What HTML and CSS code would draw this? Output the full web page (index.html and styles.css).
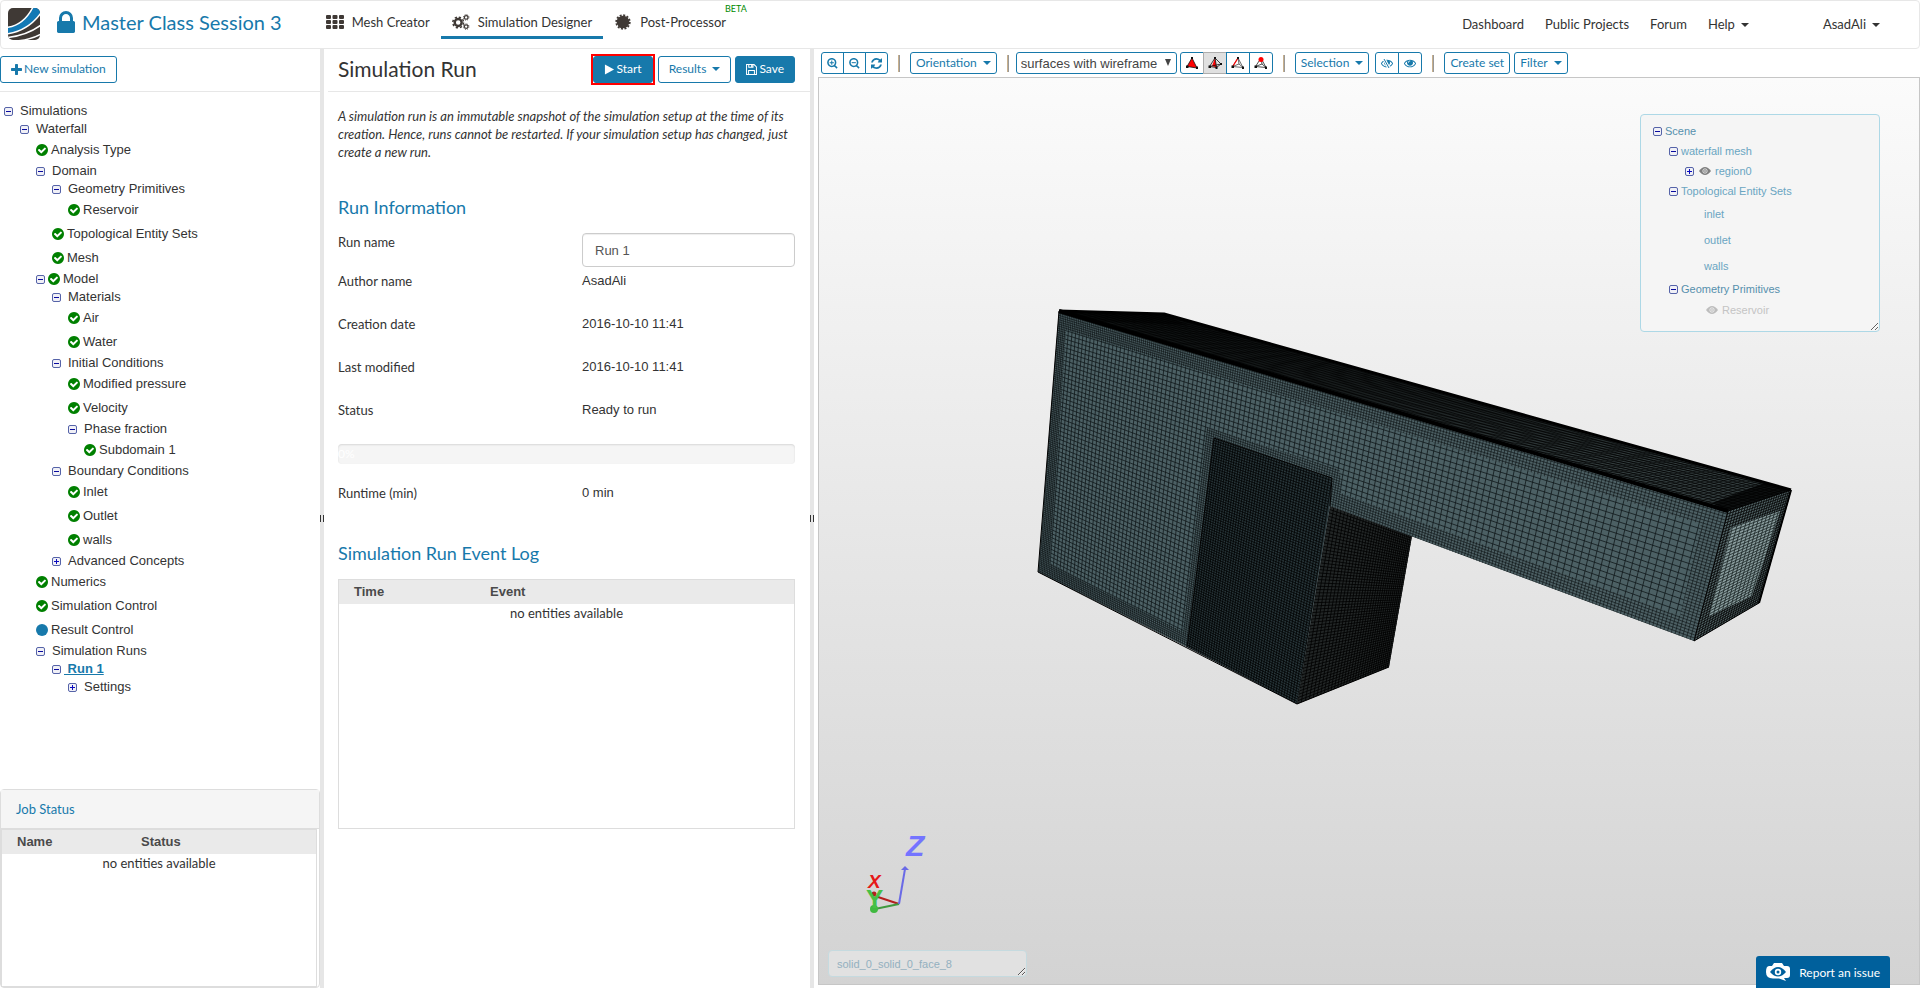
FILE: index.html
```
<!DOCTYPE html>
<html lang="en">
  <head>
    <meta charset="utf-8" />
    <meta name="viewport" content="width=device-width, initial-scale=1" />
    <title>Master Class Session 3</title>
    <link rel="stylesheet" href="styles.css">
    <script src="script.js" defer></script>
  </head>

  <body>
    <!-- Icon sprite -->
    <svg class="sprite" aria-hidden="true">
      <symbol id="lock" viewBox="320 128 1152 1408"><path d="M640 768h512v-192q0-106-75-181t-181-75-181 75-75 181v192zm832 96v576q0 40-28 68t-68 28h-960q-40 0-68-28t-28-68v-576q0-40 28-68t68-28h32v-192q0-184 132-316t316-132 316 132 132 316v192h32q40 0 68 28t28 68z"/></symbol>
      <symbol id="plus" viewBox="192 128 1408 1408"><path d="M1600 736v192q0 40-28 68t-68 28h-416v416q0 40-28 68t-68 28h-192q-40 0-68-28t-28-68v-416h-416q-40 0-68-28t-28-68v-192q0-40 28-68t68-28h416v-416q0-40 28-68t68-28h192q40 0 68 28t28 68v416h416q40 0 68 28t28 68z"/></symbol>
      <symbol id="check" viewBox="128 128 1536 1536"><path d="M1412 734q0-28-18-46l-91-90q-19-19-45-19t-45 19l-408 407-226-226q-19-19-45-19t-45 19l-91 90q-18 18-18 46 0 27 18 45l362 362q19 19 45 19 27 0 46-19l543-543q18-18 18-45zm252 162q0 209-103 385.5t-279.5 279.5-385.5 103-385.5-103-279.5-279.5-103-385.5 103-385.5 279.5-279.5 385.5-103 385.5 103 279.5 279.5 103 385.5z"/></symbol>
      <symbol id="dot" viewBox="0 0 12 12"><circle cx="6" cy="6" r="6"/></symbol>
      <symbol id="refresh" viewBox="128 128 1536 1536"><path d="M1639 1056q0 5-1 7-64 268-268 434.5t-478 166.5q-146 0-282.5-55t-243.5-157l-129 129q-19 19-45 19t-45-19-19-45v-448q0-26 19-45t45-19h448q26 0 45 19t19 45-19 45l-137 137q71 66 161 102t187 36q134 0 250-65t186-179q11-17 53-117 8-23 30-23h192q13 0 22.5 9.5t9.5 22.5zm25-800v448q0 26-19 45t-45 19h-448q-26 0-45-19t-19-45 19-45l138-138q-148-137-349-137-134 0-250 65t-186 179q-11 17-53 117-8 23-30 23h-199q-13 0-22.5-9.5t-9.5-22.5v-7q65-268 270-434.5t480-166.5q146 0 284 55.5t245 156.5l130-129q19-19 45-19t45 19 19 45z"/></symbol>
      <symbol id="zoom-in" viewBox="0 0 12 12"><path d="M9.4 5a4.2 4.2 0 1 1-8.4 0a4.2 4.2 0 0 1 8.4 0zM8.2 8.2L11 11" fill="none" stroke="currentColor" stroke-width="1.7"/><path d="M5.2 2.8v4.6M2.9 5.1h4.6" stroke="currentColor" stroke-width="1.1"/></symbol>
      <symbol id="zoom-out" viewBox="0 0 12 12"><path d="M9.4 5a4.2 4.2 0 1 1-8.4 0a4.2 4.2 0 0 1 8.4 0zM8.2 8.2L11 11" fill="none" stroke="currentColor" stroke-width="1.7"/><path d="M2.9 5.1h4.6" stroke="currentColor" stroke-width="1.1"/></symbol>
      <symbol id="eye" viewBox="0 384 1792 1152"><path d="M1664 960q-152-236-381-353 61 104 61 225 0 185-131.5 316.5t-316.5 131.5-316.5-131.5-131.5-316.5q0-121 61-225-229 117-381 353 133 205 333.5 326.5t434.5 121.5 434.5-121.5 333.5-326.5zm-720-384q0-20-14-34t-34-14q-125 0-214.5 89.5t-89.5 214.5q0 20 14 34t34 14 34-14 14-34q0-86 61-147t147-61q20 0 34-14t14-34zm848 384q0 34-20 69-140 230-376.5 368.5t-499.5 138.5-499.5-139-376.5-368q-20-35-20-69t20-69q140-229 376.5-368t499.5-139 499.5 139 376.5 368q20 35 20 69z"/></symbol>
      <symbol id="eye-full" viewBox="0 0 12 8"><path d="M0 4Q3 0 6 0t6 4q-3 4-6 4T0 4z" opacity=".75"/><circle cx="6" cy="4" r="2.2" fill="none" stroke="#f4f4f4" stroke-width=".8"/><circle cx="6" cy="4" r=".8" fill="#f4f4f4"/></symbol>
      <symbol id="grid" viewBox="0 0 18 14"><path d="M0 1q0-1 1-1h3q1 0 1 1v2q0 1-1 1H1q-1 0-1-1zM6.500 1q0-1 1-1h3q1 0 1 1v2q0 1-1 1h-3q-1 0-1-1zM13 1q0-1 1-1h3q1 0 1 1v2q0 1-1 1h-3q-1 0-1-1zM0 6q0-1 1-1h3q1 0 1 1v2q0 1-1 1H1q-1 0-1-1zM6.500 6q0-1 1-1h3q1 0 1 1v2q0 1-1 1h-3q-1 0-1-1zM13 6q0-1 1-1h3q1 0 1 1v2q0 1-1 1h-3q-1 0-1-1zM0 11q0-1 1-1h3q1 0 1 1v2q0 1-1 1H1q-1 0-1-1zM6.500 11q0-1 1-1h3q1 0 1 1v2q0 1-1 1h-3q-1 0-1-1zM13 11q0-1 1-1h3q1 0 1 1v2q0 1-1 1h-3q-1 0-1-1z"/></symbol>
      <symbol id="gears" viewBox="0 0 19 17"><g fill="none" stroke="currentColor"><circle cx="6.500" cy="9" r="3.700" stroke-width="2.600"/><circle cx="6.500" cy="9" r="5.700" stroke-width="1.600" stroke-dasharray="2.400 2.080"/><circle cx="15" cy="3.600" r="1.900" stroke-width="1.300"/><circle cx="15" cy="3.600" r="2.900" stroke-width="1" stroke-dasharray="1.200 1.080"/><circle cx="15" cy="13.400" r="1.900" stroke-width="1.300"/><circle cx="15" cy="13.400" r="2.900" stroke-width="1" stroke-dasharray="1.200 1.080"/></g></symbol>
      <symbol id="seal" viewBox="0 0 16 16"><circle cx="8" cy="8" r="6.300"/><circle cx="8" cy="8" r="6.800" fill="none" stroke="currentColor" stroke-width="1.800" stroke-dasharray="2 1.560"/></symbol>
      <symbol id="play" viewBox="0 0 10 12"><path d="M0 .6v10.800l10-5.400z"/></symbol>
      <symbol id="floppy" viewBox="0 0 12 12"><path d="M.6.6h8.200l2.600 2.600v8.200H.6zM3 .6v3h4.600v-3M2.800 11.400V7h6.400v4.400" fill="none" stroke="currentColor" stroke-width="1.100"/><path d="M5.600.6h1.600v2.600H5.600z"/></symbol>
      <symbol id="minus-box" viewBox="0 0 9 9"><rect x=".5" y=".5" width="8" height="8" rx="1.500" fill="#f0f0f6" stroke="#5563a8"/><path d="M2 4.500h5" stroke="#0a0aa0"/></symbol>
      <symbol id="plus-box" viewBox="0 0 9 9"><rect x=".5" y=".5" width="8" height="8" rx="1.500" fill="#f0f0f6" stroke="#5563a8"/><path d="M2 4.500h5M4.500 2v5" stroke="#0a0ac0"/></symbol>
      <symbol id="tetra-surface" viewBox="0 0 14 12"><path d="M7 1L2 9.500l10 1.500z" fill="red"/><path d="M7 1L2 9.500l10 1.500M7 1l5 10" fill="none" stroke="#111" stroke-width=".8"/><path d="M6 0h2v2H6zM1 8.500h2.500V11H1zM11 9.500h2V12h-2z" fill="#111"/></symbol>
      <symbol id="tetra-half" viewBox="0 0 14 12"><path d="M7 1L4 9l4.500 1.500z" fill="red"/><path d="M7 1L1.500 9.500l7 1L13 7zM7 1l1.500 9M1.500 9.500L13 7" fill="none" stroke="#111" stroke-width=".8"/><path d="M6 0h2v2H6zM.5 8.500H3V11H.5zM7.500 9.500h2V12h-2zM12 6h2v2h-2z" fill="#111"/></symbol>
      <symbol id="tetra-edge" viewBox="0 0 14 12"><path d="M7 1L1.500 9.500l10.500 1L7 1l1 6-6.500 2.500M8 7l4 3.500" fill="none" stroke="#444" stroke-width=".8"/><path d="M7 1L2 9" stroke="red" stroke-width="1.200"/><path d="M6 0h2v2H6zM.5 8.500H3V11H.5zM11 9.500h2V12h-2z" fill="#111"/></symbol>
      <symbol id="tetra-node" viewBox="0 0 14 12"><path d="M7 1L1.500 9.500l10.500 1L7 1l1 6-6.500 2.500M8 7l4 3.500" fill="none" stroke="#222" stroke-width=".8"/><circle cx="7" cy="2.500" r="2.500" fill="red"/><path d="M.5 8.500H3V11H.5zM11 9.500h2V12h-2z" fill="#111"/></symbol>
    </svg>

    <header class="navbar">
      <svg class="logo" viewBox="0 0 32 32">
        <clipPath id="logoClip"><rect width="32" height="32" rx="5"/></clipPath>
        <g clip-path="url(#logoClip)">
          <rect width="32" height="32" fill="#3f3935"/>
          <path d="M0 19Q17 16 25 0H32V5Q20 23 0 26z" fill="#1279b5"/>
          <path d="M-1 19.500Q16 17 25-1M-1 26Q20 23 33 5M-1 29.500Q19 27.500 33 17M8 33Q22 32 33 26" fill="none" stroke="#fff" stroke-width="1.500"/>
        </g>
      </svg>
      <a class="project" href="#"><svg class="lock"><use href="#lock"/></svg>Master Class Session 3</a>
      <nav class="tabs">
        <a class="tab" href="#"><svg class="tab-icon"><use href="#grid"/></svg>Mesh Creator</a>
        <a class="tab active" href="#"><svg class="tab-icon"><use href="#gears"/></svg>Simulation Designer</a>
        <a class="tab" href="#"><svg class="tab-icon"><use href="#seal"/></svg>Post-Processor<span class="beta">BETA</span></a>
      </nav>
      <nav class="links">
        <a href="#">Dashboard</a>
        <a href="#">Public Projects</a>
        <a href="#">Forum</a>
        <a href="#">Help<span class="caret"></span></a>
        <a class="user" href="#">AsadAli<span class="caret"></span></a>
      </nav>
    </header>

    <main class="workspace">
      <!-- Simulation tree -->
      <section class="sidebar">
        <div class="bar">
          <button type="button" class="btn"><svg class="icon"><use href="#plus"/></svg>New simulation</button>
        </div>
        <ul class="tree">
          <li><div class="node"><button class="toggle" aria-label="Collapse"><svg><use href="#minus-box"/></svg></button><a href="#">Simulations</a></div>
            <ul>
              <li><div class="node"><button class="toggle" aria-label="Collapse"><svg><use href="#minus-box"/></svg></button><a href="#">Waterfall</a></div>
                <ul>
                  <li class="leaf"><svg class="state"><use href="#check"/></svg><a href="#">Analysis Type</a></li>
                  <li><div class="node"><button class="toggle" aria-label="Collapse"><svg><use href="#minus-box"/></svg></button><a href="#">Domain</a></div>
                    <ul>
                      <li><div class="node"><button class="toggle" aria-label="Collapse"><svg><use href="#minus-box"/></svg></button><a href="#">Geometry Primitives</a></div>
                        <ul>
                          <li class="leaf"><svg class="state"><use href="#check"/></svg><a href="#">Reservoir</a></li>
                        </ul>
                      </li>
                      <li class="leaf"><svg class="state"><use href="#check"/></svg><a href="#">Topological Entity Sets</a></li>
                      <li class="leaf"><svg class="state"><use href="#check"/></svg><a href="#">Mesh</a></li>
                    </ul>
                  </li>
                  <li><div class="node checked"><button class="toggle" aria-label="Collapse"><svg><use href="#minus-box"/></svg></button><svg class="state"><use href="#check"/></svg><a href="#">Model</a></div>
                    <ul>
                      <li><div class="node"><button class="toggle" aria-label="Collapse"><svg><use href="#minus-box"/></svg></button><a href="#">Materials</a></div>
                        <ul>
                          <li class="leaf"><svg class="state"><use href="#check"/></svg><a href="#">Air</a></li>
                          <li class="leaf"><svg class="state"><use href="#check"/></svg><a href="#">Water</a></li>
                        </ul>
                      </li>
                      <li><div class="node"><button class="toggle" aria-label="Collapse"><svg><use href="#minus-box"/></svg></button><a href="#">Initial Conditions</a></div>
                        <ul>
                          <li class="leaf"><svg class="state"><use href="#check"/></svg><a href="#">Modified pressure</a></li>
                          <li class="leaf"><svg class="state"><use href="#check"/></svg><a href="#">Velocity</a></li>
                          <li><div class="node"><button class="toggle" aria-label="Collapse"><svg><use href="#minus-box"/></svg></button><a href="#">Phase fraction</a></div>
                            <ul>
                              <li class="leaf"><svg class="state"><use href="#check"/></svg><a href="#">Subdomain 1</a></li>
                            </ul>
                          </li>
                        </ul>
                      </li>
                      <li><div class="node"><button class="toggle" aria-label="Collapse"><svg><use href="#minus-box"/></svg></button><a href="#">Boundary Conditions</a></div>
                        <ul>
                          <li class="leaf"><svg class="state"><use href="#check"/></svg><a href="#">Inlet</a></li>
                          <li class="leaf"><svg class="state"><use href="#check"/></svg><a href="#">Outlet</a></li>
                          <li class="leaf"><svg class="state"><use href="#check"/></svg><a href="#">walls</a></li>
                        </ul>
                      </li>
                      <li><div class="node"><button class="toggle" aria-label="Expand"><svg><use href="#plus-box"/></svg></button><a href="#">Advanced Concepts</a></div></li>
                    </ul>
                  </li>
                  <li class="leaf"><svg class="state"><use href="#check"/></svg><a href="#">Numerics</a></li>
                  <li class="leaf"><svg class="state"><use href="#check"/></svg><a href="#">Simulation Control</a></li>
                  <li class="leaf"><svg class="state info"><use href="#dot"/></svg><a href="#">Result Control</a></li>
                  <li><div class="node"><button class="toggle" aria-label="Collapse"><svg><use href="#minus-box"/></svg></button><a href="#">Simulation Runs</a></div>
                    <ul>
                      <li><div class="node checked"><button class="toggle" aria-label="Collapse"><svg><use href="#minus-box"/></svg></button><a class="selected" href="#">&nbsp;Run 1</a></div>
                        <ul>
                          <li><div class="node"><button class="toggle" aria-label="Expand"><svg><use href="#plus-box"/></svg></button><a href="#">Settings</a></div></li>
                        </ul>
                      </li>
                    </ul>
                  </li>
                </ul>
              </li>
            </ul>
          </li>
        </ul>
        <div class="jobs">
          <h3>Job Status</h3>
          <div class="grid-box">
            <table>
              <thead><tr><th class="col-name">Name</th><th>Status</th></tr></thead>
              <tbody><tr><td colspan="2">no entities available</td></tr></tbody>
            </table>
          </div>
        </div>
      </section>

      <div class="splitter"></div>

      <!-- Run form -->
      <section class="details">
        <div class="bar bar-run">
          <h1>Simulation Run</h1>
          <span class="highlight"><button type="button" class="btn primary"><svg class="icon"><use href="#play"/></svg>Start</button></span>
          <button type="button" class="btn">Results<span class="caret"></span></button>
          <button type="button" class="btn primary"><svg class="icon"><use href="#floppy"/></svg>Save</button>
        </div>
        <form class="run-form">
          <p class="hint">A simulation run is an immutable snapshot of the simulation setup at the time of its creation. Hence, runs cannot be restarted. If your simulation setup has changed, just create a new run.</p>
          <h2>Run Information</h2>
          <div class="row first"><label for="runName">Run name</label><input type="text" id="runName" value="Run 1" /></div>
          <div class="row"><span>Author name</span><span class="value">AsadAli</span></div>
          <div class="row"><span>Creation date</span><span class="value">2016-10-10 11:41</span></div>
          <div class="row"><span>Last modified</span><span class="value">2016-10-10 11:41</span></div>
          <div class="row"><span>Status</span><span class="value">Ready to run</span></div>
          <div class="progress" role="progressbar" aria-valuenow="0">0%</div>
          <div class="row"><span>Runtime (min)</span><span class="value">0 min</span></div>
          <h2 class="log-title">Simulation Run Event Log</h2>
          <div class="grid-box log">
            <table>
              <thead><tr><th class="col-time">Time</th><th>Event</th></tr></thead>
              <tbody><tr><td colspan="2">no entities available</td></tr></tbody>
            </table>
          </div>
        </form>
      </section>

      <div class="splitter"></div>

      <!-- 3D viewer -->
      <section class="viewer">
        <div class="toolbar">
          <div class="group views">
            <button type="button" class="btn small square" aria-label="Zoom in"><svg class="icon"><use href="#zoom-in"/></svg></button>
            <button type="button" class="btn small square" aria-label="Zoom out"><svg class="icon"><use href="#zoom-out"/></svg></button>
            <button type="button" class="btn small square" aria-label="Reset view"><svg class="icon"><use href="#refresh"/></svg></button>
          </div>
          <span class="sep"></span>
          <button type="button" class="btn small">Orientation<span class="caret"></span></button>
          <span class="sep"></span>
          <div class="group pick">
            <span class="select-wrap">
              <select aria-label="Render mode"><option>surfaces with wireframe</option></select>
              <span class="arrow"></span>
            </span>
            <div class="group">
              <button type="button" class="btn small square" aria-label="Pick volumes"><svg class="tetra"><use href="#tetra-surface"/></svg></button>
              <button type="button" class="btn small square pressed" aria-label="Pick faces"><svg class="tetra"><use href="#tetra-half"/></svg></button>
              <button type="button" class="btn small square" aria-label="Pick edges"><svg class="tetra"><use href="#tetra-edge"/></svg></button>
              <button type="button" class="btn small square" aria-label="Pick nodes"><svg class="tetra"><use href="#tetra-node"/></svg></button>
            </div>
          </div>
          <span class="sep"></span>
          <div class="group spaced">
            <button type="button" class="btn small">Selection<span class="caret"></span></button>
            <div class="group">
              <button type="button" class="btn small square" aria-label="Hide"><svg class="icon eye" viewBox="0 0 12 9"><use href="#eye" width="12" height="9"/><path d="M3 0l5 9" stroke="#fff" stroke-width="3"/><path d="M3 0l5 9" stroke="currentColor"/></svg></button>
              <button type="button" class="btn small square" aria-label="Show"><svg class="icon eye"><use href="#eye"/></svg></button>
            </div>
          </div>
          <span class="sep"></span>
          <div class="group create">
            <button type="button" class="btn small">Create set</button>
            <button type="button" class="btn small">Filter<span class="caret"></span></button>
          </div>
        </div>

        <div class="canvas">
          <svg class="model" id="model" viewBox="819 78 1100 906"></svg>

          <div class="scene">
            <ul>
              <li><div class="node"><button class="toggle" aria-label="Collapse"><svg><use href="#minus-box"/></svg></button><a class="strong" href="#">Scene</a></div>
                <ul>
                  <li><div class="node"><button class="toggle" aria-label="Collapse"><svg><use href="#minus-box"/></svg></button><a href="#">waterfall mesh</a></div>
                    <ul>
                      <li><div class="node"><button class="toggle" aria-label="Expand"><svg><use href="#plus-box"/></svg></button><svg class="vis"><use href="#eye-full"/></svg><a href="#">region0</a></div></li>
                    </ul>
                  </li>
                  <li><div class="node"><button class="toggle" aria-label="Collapse"><svg><use href="#minus-box"/></svg></button><a href="#">Topological Entity Sets</a></div>
                    <ul class="entities">
                      <li><a href="#">inlet</a></li>
                      <li><a href="#">outlet</a></li>
                      <li><a href="#">walls</a></li>
                    </ul>
                  </li>
                  <li><div class="node"><button class="toggle" aria-label="Collapse"><svg><use href="#minus-box"/></svg></button><a class="strong" href="#">Geometry Primitives</a></div>
                    <ul class="entities">
                      <li class="off"><svg class="vis"><use href="#eye-full"/></svg><a href="#">Reservoir</a></li>
                    </ul>
                  </li>
                </ul>
              </li>
            </ul>
          </div>

          <div class="picked">solid_0_solid_0_face_8</div>
        </div>
      </section>
    </main>

    <button type="button" class="report">
      <svg viewBox="0 0 24 18"><path d="M3 3h3l2-3h8l2 3h3q3 0 3 3v6q0 3-3 3h-3l2 3-7-2.500h-5Q0 16 0 9q0-6 3-6z" fill="#fff"/><path d="M4 9q8-10 16 0-8 9-16 0z" fill="#00609c"/><circle cx="12" cy="9" r="3.200" fill="#fff"/><circle cx="12" cy="9" r="1.500" fill="#00609c"/></svg>
      Report an issue
    </button>
  </body>
</html>
```
FILE: styles.css
```
* {
  box-sizing: border-box;
}

body {
  margin: 0;
  height: 100vh;
  display: flex;
  flex-direction: column;
  overflow: hidden;
  background-color: #fff;
  color: #333;
  font-family: Lato, sans-serif;
  font-size: 13px;
  line-height: 18px;
}

a {
  color: inherit;
  text-decoration: none;
}

ul {
  list-style: none;
  margin: 0;
  padding: 0;
}

h1, h2, h3 {
  margin: 0;
  font-weight: normal;
}

svg {
  fill: currentColor;
  flex: none;
}

.sprite {
  position: absolute;
  width: 0;
  height: 0;
}

.caret {
  display: inline-block;
  margin-left: 6px;
  vertical-align: middle;
  border-top: 4px solid;
  border-left: 4px solid transparent;
  border-right: 4px solid transparent;
}

/* Navbar */
.navbar {
  flex: none;
  display: flex;
  align-items: center;
  height: 49px;
  padding: 0 39px 2px 7px;
  border: 1px solid #e7e7e7;
  border-radius: 4px;
}

.logo {
  width: 32px;
  height: 32px;
}

.project {
  display: flex;
  align-items: center;
  gap: 7px;
  margin-left: 17px;
  padding-bottom: 3px;
  font-size: 20px;
  line-height: 24px;
  color: #1779ab;
}

.lock {
  width: 18px;
  height: 22px;
}

.tabs {
  display: flex;
  margin-left: 33px;
}

.tab {
  position: relative;
  display: flex;
  align-items: center;
  gap: 8px;
  height: 30px;
  padding: 0 11px;
  border-bottom: 3px solid transparent;
}

.tab.active {
  border-color: #1779ab;
}

.tab-icon {
  width: 18px;
  height: 16px;
  color: #3f3935;
}

.beta {
  position: absolute;
  left: 100%;
  top: -6px;
  margin-left: -12px;
  font-size: 9px;
  line-height: 12px;
  color: #008a00;
}

.links {
  display: flex;
  gap: 21px;
  margin-left: auto;
}

.user {
  margin-left: 53px;
}

/* Columns */
.workspace {
  flex: 1;
  min-height: 0;
  display: grid;
  grid-template-columns: 320px 4px 486px 4px 1fr;
}

.splitter {
  display: flex;
  justify-content: flex-end;
  align-items: center;
  background-color: #e6e6e6;
}

.splitter::after {
  content: "";
  width: 3px;
  height: 7px;
  border: solid #333;
  border-width: 0 1px;
}

.bar {
  flex: none;
  display: flex;
  align-items: center;
  height: 43px;
  padding-bottom: 2px;
  border-bottom: 1px solid #e7e7e7;
}

.btn {
  display: inline-flex;
  align-items: center;
  justify-content: center;
  height: 27px;
  padding: 0 10px;
  border: 1px solid #1779ab;
  border-radius: 3px;
  background-color: #fff;
  color: #1779ab;
  font-family: inherit;
  font-size: 12px;
  line-height: 18px;
  white-space: nowrap;
  cursor: pointer;
}

.btn.primary {
  background-color: #1779ab;
  color: #fff;
}

.icon {
  width: 11px;
  height: 11px;
  margin-right: 2px;
}

/* Simulation tree */
.sidebar {
  display: flex;
  flex-direction: column;
}

.tree {
  flex: 1;
  padding: 10px 4px;
  font-family: "Liberation Sans", sans-serif;
  font-size: 13px;
}

.tree ul {
  padding-left: 16px;
}

.node, .leaf {
  display: flex;
  align-items: center;
  height: 18px;
  gap: 7px;
}

.leaf {
  height: 24px;
  gap: 3px;
}

.node.checked {
  gap: 3px;
}

.toggle {
  display: flex;
  padding: 0;
  border: 0;
  background: none;
}

.toggle svg {
  width: 9px;
  height: 9px;
}

.state {
  width: 12px;
  height: 12px;
  color: #008000;
}

.state.info, .selected {
  color: #1779ab;
}

.selected {
  font-weight: bold;
  text-decoration: underline;
}

/* Tables */
.jobs {
  height: 199px;
  display: flex;
  flex-direction: column;
  border: 1px solid #ddd;
  border-radius: 4px;
}

.jobs h3 {
  padding: 10px 15px;
  border-bottom: 1px solid #ddd;
  background-color: #f5f5f5;
  font-size: 13px;
  color: #1779ab;
}

.grid-box {
  border: 1px solid #ddd;
}

.jobs .grid-box {
  flex: 1;
  margin-right: 2px;
}

table {
  width: 100%;
  border-collapse: collapse;
  table-layout: fixed;
}

th {
  height: 24px;
  padding: 0 0 0 15px;
  background-color: #eaeaea;
  color: #4a4a4a;
  font-family: "Liberation Sans", sans-serif;
  font-size: 13px;
  text-align: left;
}

td {
  padding: 0;
  text-align: center;
}

.col-name {
  width: 124px;
}

.col-time {
  width: 136px;
}

/* Run form */
.bar-run {
  margin-left: 4px;
  padding-left: 10px;
  padding-right: 15px;
}

h1 {
  flex: 1;
  font-size: 21px;
  line-height: 26px;
}

.highlight {
  display: flex;
  margin-right: 3px;
  border: 2px solid red;
}

.bar-run > .btn + .btn {
  margin-left: 4px;
}

.run-form {
  padding: 15px 15px 0 14px;
}

.hint {
  margin: 0 0 35px;
  font-style: italic;
}

h2 {
  height: 37px;
  font-size: 18px;
  line-height: 22px;
  color: #1779ab;
}

.row {
  display: grid;
  grid-template-columns: 244px 1fr;
  align-items: start;
  height: 43px;
}

.row.first {
  height: 39px;
}

.row input {
  width: 100%;
  height: 34px;
  padding: 0 12px;
  border: 1px solid #ccc;
  border-radius: 4px;
  box-shadow: inset 0 1px 1px rgba(0, 0, 0, 0.07);
  color: #555;
  font-family: "Liberation Sans", sans-serif;
  font-size: 13px;
}

.value {
  font-family: "Liberation Sans", sans-serif;
  font-size: 13px;
}

.progress {
  height: 20px;
  margin-bottom: 20px;
  border-radius: 4px;
  background-color: #f5f5f5;
  box-shadow: inset 0 1px 2px rgba(0, 0, 0, 0.12);
  color: #fff;
  font-size: 12px;
  line-height: 20px;
}

.log-title {
  margin-top: 15px;
}

.log {
  height: 250px;
}

/* Viewer */
.viewer {
  min-width: 0;
  display: flex;
  flex-direction: column;
  padding: 0 0 3px 4px;
}

.toolbar {
  display: flex;
  align-items: center;
  height: 28px;
  padding-left: 3px;
}

.group {
  display: flex;
}

.group .square + .square {
  margin-left: -1px;
}

.group .square:not(:first-child) {
  border-top-left-radius: 0;
  border-bottom-left-radius: 0;
}

.group .square:not(:last-child) {
  border-top-right-radius: 0;
  border-bottom-right-radius: 0;
}

.btn.small {
  height: 22px;
  padding: 0 5px;
}

.btn.square {
  width: 24px;
  padding: 0;
}

.views .btn.square {
  width: 23px;
}

.square .icon {
  margin: 0;
}

.icon.eye {
  width: 12px;
  height: 9px;
}

.btn.pressed {
  background-color: #e0e0e0;
  border-color: #adadad;
}

.tetra {
  width: 14px;
  height: 12px;
}

.pick {
  gap: 3px;
  margin-left: -3px;
}

.spaced {
  gap: 6px;
}

.create {
  gap: 4px;
}

.sep {
  width: 2px;
  height: 17px;
  margin: 0 10px;
  border-left: 1px solid #c8b08c;
  border-right: 1px solid #999;
}

.select-wrap {
  position: relative;
  display: flex;
}

select {
  width: 161px;
  height: 22px;
  padding: 0 4px;
  border: 1px solid #1779ab;
  border-radius: 3px;
  background-color: #fff;
  appearance: none;
  color: #444;
  font-family: "Liberation Sans", sans-serif;
  font-size: 13px;
}

.arrow {
  position: absolute;
  right: 6px;
  top: 7px;
  border-top: 7px solid #444;
  border-left: 3px solid transparent;
  border-right: 3px solid transparent;
}

.canvas {
  flex: 1;
  min-height: 0;
  position: relative;
  border: 1px solid #c6c6c6;
  background: linear-gradient(#fbfbfb, #d3d3d3);
}

.model {
  display: block;
  width: 100%;
  height: 100%;
}

.axis-label {
  font-family: "Liberation Sans", sans-serif;
  font-weight: bold;
}

.scene, .picked {
  position: absolute;
  overflow: hidden;
  resize: both;
  border: 1px solid #add8e6;
  border-radius: 4px;
  background-color: #f5f5f5;
  font-family: "Liberation Sans", sans-serif;
  font-size: 11px;
  color: #6aa5c2;
}

.scene {
  top: 36px;
  right: 39px;
  width: 240px;
  height: 218px;
  padding: 6px 12px;
}

.scene ul ul {
  padding-left: 16px;
}

.scene .node {
  height: 20px;
  gap: 3px;
}

.scene .strong {
  color: #5590ad;
}

.vis {
  width: 12px;
  height: 8px;
  margin: 0 1px 0 2px;
  color: #555;
}

.scene .entities {
  padding-left: 35px;
}

.entities li {
  display: flex;
  align-items: center;
  gap: 3px;
  height: 26px;
}

.entities .off {
  height: 22px;
  color: #c4c4c4;
}

.off .vis {
  color: #aaa;
}

.picked {
  left: 9px;
  bottom: 7px;
  width: 199px;
  height: 27px;
  padding: 4px 8px;
  border-color: #c5dadf;
  background-color: #e1e1e1;
  color: #93b0bf;
}

.report {
  position: fixed;
  right: 30px;
  bottom: 0;
  display: flex;
  align-items: center;
  gap: 9px;
  height: 32px;
  padding: 0 10px;
  border: 0;
  border-radius: 3px 3px 0 0;
  background-color: #00609c;
  color: #fff;
  font-family: inherit;
  font-size: 12px;
}

.report svg {
  width: 24px;
  height: 18px;
}
```
FILE: script.js
```
var NS = "http://www.w3.org/2000/svg";
var svg = document.getElementById("model");
var clipCount = 0;

function add(parent, name, attrs) {
  var el = document.createElementNS(NS, name);
  for (var key in attrs) {
    el.setAttribute(key, attrs[key]);
  }
  parent.appendChild(el);
  return el;
}

// Maps the unit square onto a quad, with perspective
function project(q) {
  var dx1 = q[1][0] - q[2][0], dx2 = q[3][0] - q[2][0];
  var dy1 = q[1][1] - q[2][1], dy2 = q[3][1] - q[2][1];
  var sx = q[0][0] - q[1][0] + q[2][0] - q[3][0];
  var sy = q[0][1] - q[1][1] + q[2][1] - q[3][1];
  var det = dx1 * dy2 - dx2 * dy1;
  var g = (sx * dy2 - dx2 * sy) / det;
  var h = (dx1 * sy - sx * dy1) / det;
  var a = q[1][0] - q[0][0] + g * q[1][0], b = q[3][0] - q[0][0] + h * q[3][0];
  var d = q[1][1] - q[0][1] + g * q[1][1], e = q[3][1] - q[0][1] + h * q[3][1];
  return function (u, v) {
    var w = g * u + h * v + 1;
    return ((a * u + b * v + q[0][0]) / w).toFixed(1) + " " + ((d * u + e * v + q[0][1]) / w).toFixed(1);
  };
}

// Fills a polygon and draws the mesh lines of its plane inside it
function face(outline, quad, cols, rows, vMax, fill, line, width) {
  var points = outline.join(" ");
  var id = "face" + clipCount++;
  add(add(svg, "clipPath", { id: id }), "polygon", { points: points });
  add(svg, "polygon", { points: points, fill: fill });
  var at = project(quad);
  var d = "";
  for (var i = 0; i <= cols; i++) {
    d += "M" + at(i / cols, 0) + "L" + at(i / cols, vMax);
  }
  for (var j = 0; j <= rows * vMax; j++) {
    d += "M" + at(0, j / rows) + "L" + at(1, j / rows);
  }
  add(svg, "path", { d: d, fill: "none", stroke: line, "stroke-width": width, "clip-path": "url(#" + id + ")" });
}

function edge(points, width) {
  add(svg, "polyline", { points: points.join(" "), fill: "none", stroke: "#000", "stroke-width": width, "stroke-linejoin": "round" });
}

var A = [1059, 311], B = [1164, 314], C = [1791, 490], D = [1728, 511];
var E = [1694, 641], F = [1759, 603], G = [1038, 572], H = [1187, 647];
var N = [1214, 438], I = [1332, 478], J = [1330, 506], K = [1052, 403];
var L = [1412, 536], M = [1389, 667], P = [1297, 704];

// Top
face([A, B, C, D], [A, B, C, D], 14, 190, 1, "#333d3e", "#000", 0.7);
add(svg, "polygon", { points: [A, B, [1186, 325], [1094, 321]].join(" "), fill: "#000", opacity: 0.45 });
add(svg, "polygon", { points: [D, C, [1764, 483], [1712, 503]].join(" "), fill: "#000", opacity: 0.75 });

// Inner walls under the beam
face([J, L, M, P], [J, L, M, P], 32, 60, 1, "#222626", "#000", 0.8);
face([N, I, J, P, H], [N, I, P, H], 45, 90, 1, "#28363a", "#020404", 0.8);

// Front, fine layer at the border and coarser cells inside
var front = [A, D, E, K];
face([A, D, E, J, I, N, H, G], front, 250, 44, 3.6, "#4d6064", "#0a0f10", 0.6);
face(
  [[1066, 330], [1701, 524], [1680, 616], [1341, 493], [1340, 470], [1207, 427], [1183, 632], [1050, 563]],
  front, 125, 22, 3.6, "#4c6064", "#10181a", 0.8
);

// Outlet end
face([D, C, F, E], [D, C, F, E], 24, 45, 1, "#536567", "#050505", 0.8);
face([[1731, 528], [1780, 511], [1752, 596], [1709, 616]], [D, C, F, E], 15, 40, 1, "#8a9d9e", "#1b2425", 0.8);

edge([A, B, C], 3);
edge([A, D], 4);
edge([D, C, F, E, D], 1);
edge([A, G, P, M], 1);
edge([C, F], 2);
edge([H, N, I, J], 1);

// Orientation axes
add(svg, "path", { d: "M899 904L875 896", stroke: "#b51f1f", "stroke-width": 2 });
add(svg, "path", { d: "M899 904L875 909", stroke: "#3f9a3f", "stroke-width": 2 });
add(svg, "path", { d: "M899 904L905 869", stroke: "#6a6ae6", "stroke-width": 2 });
add(svg, "path", { d: "M901 870L905 866L909 870Z", fill: "#6a6ae6" });
add(svg, "circle", { cx: 874, cy: 894, r: 2.5, fill: "#b51f1f" });
add(svg, "circle", { cx: 874, cy: 909, r: 4, fill: "#40b940" });

function axisLabel(text, x, y, size, color, style) {
  var el = add(svg, "text", { x: x, y: y, fill: color, "font-size": size, "font-style": style, "class": "axis-label" });
  el.textContent = text;
}

axisLabel("Z", 906, 856, 30, "#7474ff", "italic");
axisLabel("X", 868, 888, 19, "#e61919", "italic");
axisLabel("Y", 866, 908, 26, "#46c046", "normal");
```
